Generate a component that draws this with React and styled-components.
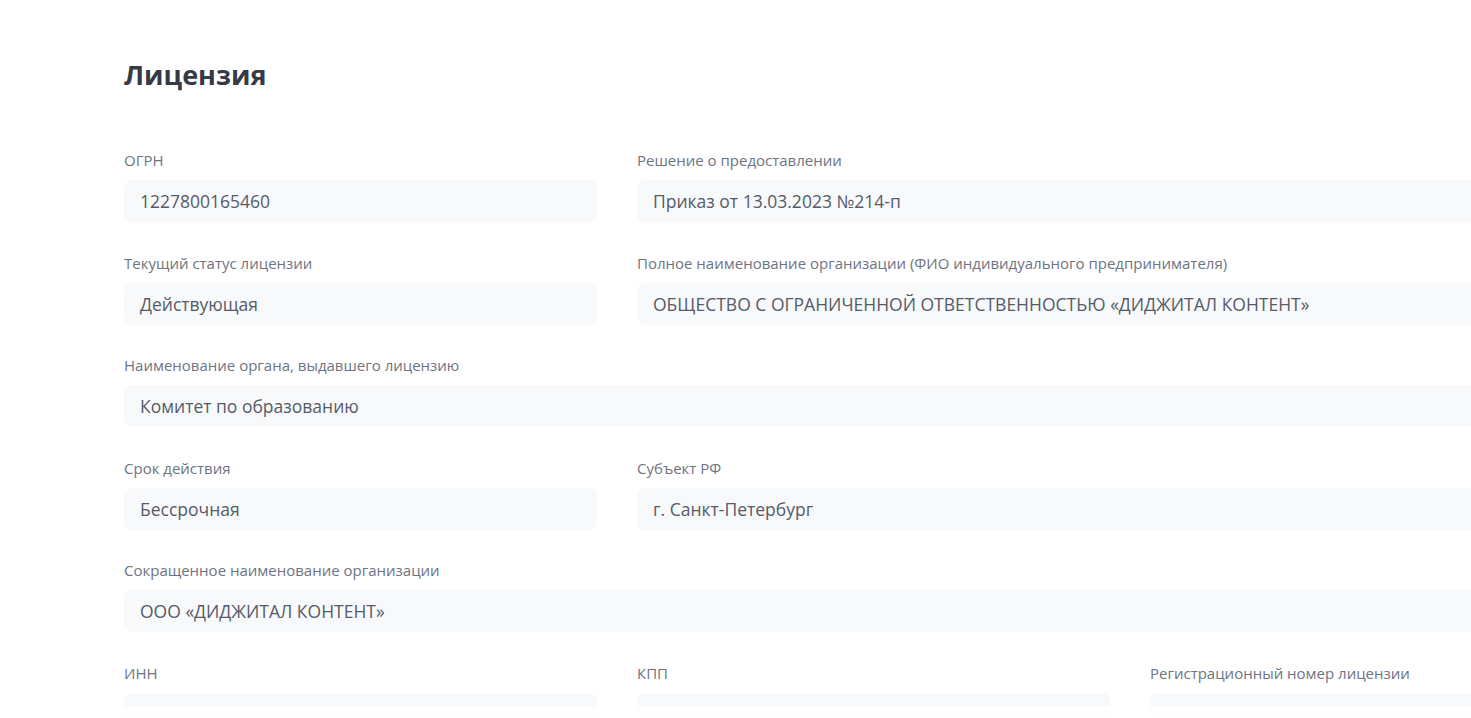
import React from 'react';
import styled, { createGlobalStyle } from 'styled-components';

const GlobalStyle = createGlobalStyle`
  html, body {
    margin: 0;
    padding: 0;
    background: #ffffff;
    overflow: hidden;
  }
  body {
    font-family: "Open Sans", "Noto Sans", Arial, sans-serif;
  }
`

const fields = [
  { label: 'ОГРН', value: '1227800165460', span: 1 },
  { label: 'Решение о предоставлении', value: 'Приказ от 13.03.2023 №214-п', span: 2 },
  { label: 'Текущий статус лицензии', value: 'Действующая', span: 1 },
  { label: 'Полное наименование организации (ФИО индивидуального предпринимателя)', value: 'ОБЩЕСТВО С ОГРАНИЧЕННОЙ ОТВЕТСТВЕННОСТЬЮ «ДИДЖИТАЛ КОНТЕНТ»', span: 2 },
  { label: 'Наименование органа, выдавшего лицензию', value: 'Комитет по образованию', span: 3 },
  { label: 'Срок действия', value: 'Бессрочная', span: 1 },
  { label: 'Субъект РФ', value: 'г. Санкт-Петербург', span: 2 },
  { label: 'Сокращенное наименование организации', value: 'ООО «ДИДЖИТАЛ КОНТЕНТ»', span: 3 },
  { label: 'ИНН', skeleton: 110, span: 1 },
  { label: 'КПП', skeleton: 85, span: 1 },
  { label: 'Регистрационный номер лицензии', skeleton: 200, span: 1 },
]

class App extends React.Component {
  render() {
    return (
      <Page>
        <GlobalStyle />
        <Title>Лицензия</Title>
        <Grid>
          {fields.map((f) => (
            <Field key={f.label} span={f.span}>
              <Label>{f.label}</Label>
              <Box>
                {f.skeleton ? <Skeleton w={f.skeleton} /> : f.value}
              </Box>
            </Field>
          ))}
        </Grid>
        <Fade />
      </Page>
    );
  }
}

export default App;

const Page = styled.div`
    padding: 57px 0 0 124px;
    width: 1499px;
    height: 661px;
    overflow: hidden;
`
const Title = styled.h1`
    margin: 0;
    font-size: 27px;
    line-height: 36px;
    font-weight: 700;
    color: #363a45;
`
const Grid = styled.div`
    display: grid;
    grid-template-columns: repeat(3, 473px);
    column-gap: 40px;
    row-gap: 30.6px;
    margin-top: 57px;
`
const Field = styled.div`
    grid-column: span ${(p) => p.span};
    display: flex;
    flex-direction: column;
    gap: 10px;
`
const Label = styled.div`
    font-size: 15px;
    line-height: 20px;
    color: #6e7481;
    white-space: nowrap;
`
const Box = styled.div`
    height: 42px;
    box-sizing: border-box;
    padding: 0 16px;
    display: flex;
    align-items: center;
    background: #f8f9fb;
    border-radius: 8px;
    font-size: 17.5px;
    color: #555b69;
    white-space: nowrap;
    overflow: hidden;
`
const Skeleton = styled.div`
    width: ${(p) => p.w}px;
    height: 10px;
    margin-top: 26px;
    border-radius: 5px;
    background: #c9ccd2;
    filter: blur(4px);
`
const Fade = styled.div`
    position: fixed;
    left: 0;
    right: 0;
    bottom: 0;
    height: 12px;
    background: rgba(255, 255, 255, 0.8);
`
